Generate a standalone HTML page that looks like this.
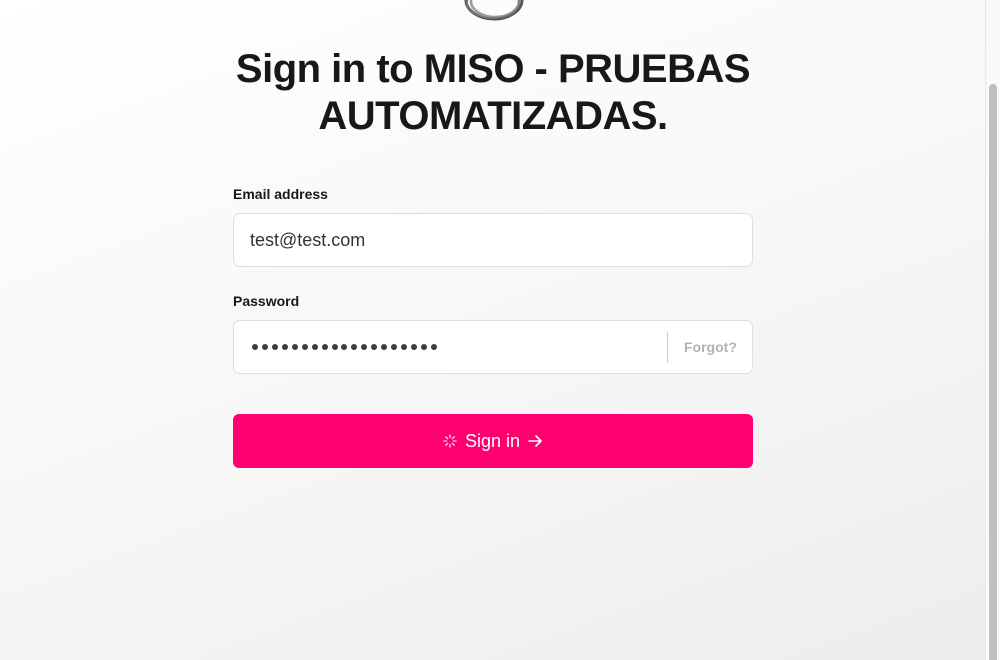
<!DOCTYPE html>
<html><head><meta charset="utf-8"><style>
*{box-sizing:border-box;margin:0;padding:0}
html,body{width:1000px;height:660px;overflow:hidden}
body{font-family:"Liberation Sans",sans-serif;background:linear-gradient(160deg,#ffffff 0%,#f7f7f7 50%,#ededed 100%);position:relative;color:#18181b}
.sb{position:absolute;left:985px;top:0;width:15px;height:660px;background:#fafafa;border-left:1px solid #e8e8e8}
.thumb{position:absolute;left:989px;top:84px;width:8px;height:580px;background:#bfbfbf;border-radius:4px}
h1{position:absolute;left:180px;width:626px;top:46px;text-align:center;font-size:40px;line-height:47px;font-weight:700;letter-spacing:-0.5px;color:#18181b}
.lbl{position:absolute;left:233px;font-size:14px;font-weight:700;color:#18181b}
.inp{position:absolute;left:233px;width:520px;height:54px;background:#fff;border:1px solid #dedede;border-radius:7px}
.val{position:absolute;left:16px;top:16px;font-size:18px;color:#333}
.dots{position:absolute;left:18px;top:23px;display:flex;gap:3.95px}
.dots i{width:6px;height:6px;border-radius:50%;background:#3a3f47;display:block}
.sep{position:absolute;left:433px;top:11px;width:1px;height:31px;background:#ccc}
.fg{position:absolute;left:450px;top:18px;font-size:14px;font-weight:700;color:#aeb3bb}
.btn{position:absolute;left:233px;top:414px;width:520px;height:54px;background:#ff0070;border-radius:6px;color:#fff;font-size:18px;display:flex;align-items:center;justify-content:center;gap:8px}
</style></head><body>
<svg style="position:absolute;left:455px;top:-40px" width="80" height="65" viewBox="0 0 80 65">
<g fill="none" stroke-linecap="round">
<ellipse cx="39" cy="40" rx="28" ry="19" stroke="#555" stroke-width="3"/>
<ellipse cx="40" cy="41" rx="24" ry="16" stroke="#999" stroke-width="2.5"/>
<ellipse cx="38" cy="43" rx="26" ry="15" stroke="#777" stroke-width="1.5"/>
</g></svg>
<h1>Sign in to MISO - PRUEBAS AUTOMATIZADAS.</h1>
<div class="lbl" style="top:186px">Email address</div>
<div class="inp" style="top:213px"><div class="val">test@test.com</div></div>
<div class="lbl" style="top:293px">Password</div>
<div class="inp" style="top:320px">
<div class="dots"><i></i><i></i><i></i><i></i><i></i><i></i><i></i><i></i><i></i><i></i><i></i><i></i><i></i><i></i><i></i><i></i><i></i><i></i><i></i></div>
<div class="sep"></div><div class="fg">Forgot?</div></div>
<div class="btn"><svg width="14" height="14" viewBox="0 0 14 14"><g stroke="#ffb3d4" stroke-width="1.6" stroke-linecap="round"><line x1="7" y1="1" x2="7" y2="3.5"/><line x1="7" y1="10.5" x2="7" y2="13"/><line x1="1" y1="7" x2="3.5" y2="7"/><line x1="10.5" y1="7" x2="13" y2="7"/><line x1="2.8" y1="2.8" x2="4.5" y2="4.5"/><line x1="9.5" y1="9.5" x2="11.2" y2="11.2"/><line x1="2.8" y1="11.2" x2="4.5" y2="9.5"/><line x1="9.5" y1="4.5" x2="11.2" y2="2.8"/></g></svg><span>Sign in</span><svg width="15" height="14" viewBox="0 0 15 14"><path d="M1 7H13M8 2L13 7L8 12" fill="none" stroke="#fff" stroke-width="1.6" stroke-linecap="round" stroke-linejoin="round"/></svg></div>
<div class="sb"></div><div class="thumb"></div>
</body></html>
